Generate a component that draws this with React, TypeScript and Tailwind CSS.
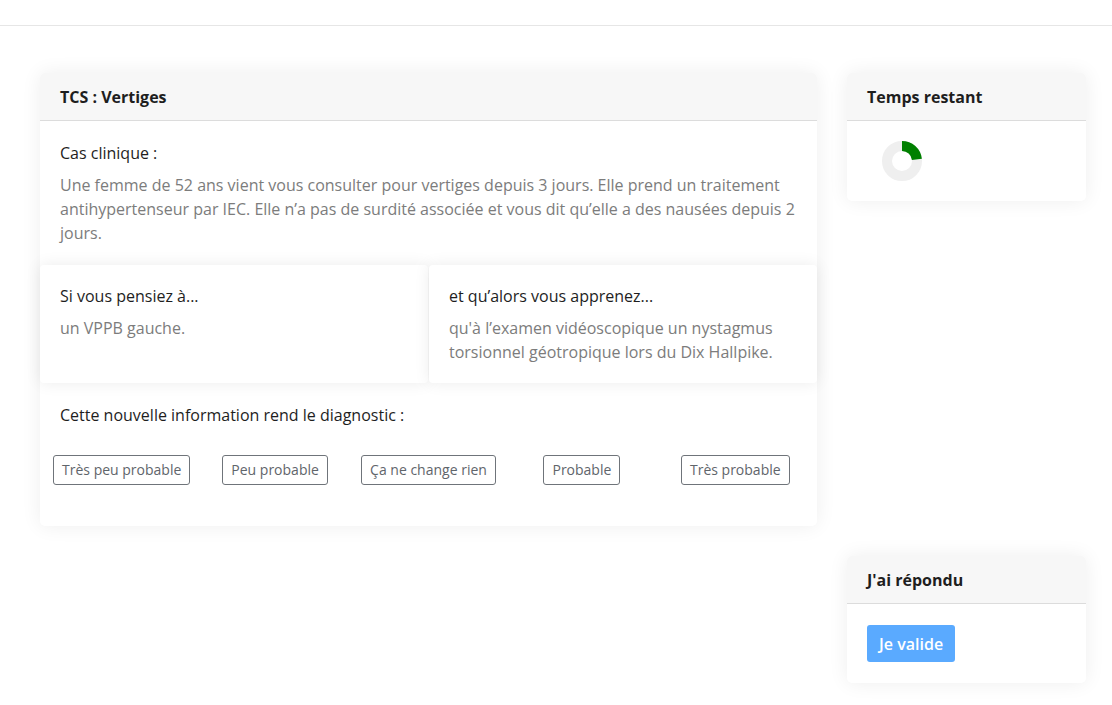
import React from 'react';

const choices = ['Très peu probable', 'Peu probable', 'Ça ne change rien', 'Probable', 'Très probable'];

function Card({ title, children, className = '' }: { title: string; children: React.ReactNode; className?: string }) {
  return (
    <div className={`bg-white rounded-[5px] shadow-[0_0_20px_rgba(0,0,0,0.07)] ${className}`}>
      <div className="h-[48px] flex items-center px-5 bg-[#f7f7f7] border-b border-[#dcdcdc] rounded-t-[5px]">
        <h3 className="text-[16px] font-bold text-[#1e1e1e]">{title}</h3>
      </div>
      {children}
    </div>
  );
}

function Donut({ percent }: { percent: number }) {
  const r = 15;
  const c = 2 * Math.PI * r;
  return (
    <svg width="40" height="40" viewBox="0 0 40 40">
      <circle cx="20" cy="20" r={r} fill="none" stroke="#efefef" strokeWidth="10" />
      <circle
        cx="20"
        cy="20"
        r={r}
        fill="none"
        stroke="#008000"
        strokeWidth="10"
        strokeDasharray={`${c * percent} ${c}`}
        transform="rotate(-90 20 20)"
      />
    </svg>
  );
}

export default function App() {
  return (
    <div className="min-h-[705px] bg-white text-[16px] leading-6 text-[#1e1e1e]" style={{ fontFamily: '"Open Sans", sans-serif' }}>
      {/* Top bar */}
      <div className="h-[26px] border-b border-[#e6e6e6]" />

      <div className="flex items-start gap-[30px] pl-[40px] pt-[47px]">
        {/* Main question card */}
        <Card title="TCS : Vertiges" className="w-[777px] pb-[41px]">
          <div className="p-5">
            <p className="mb-2">Cas clinique :</p>
            <p className="text-[#7c7c7c]">
              Une femme de 52 ans vient vous consulter pour vertiges depuis 3 jours. Elle prend un traitement
              antihypertenseur par IEC. Elle n’a pas de surdité associée et vous dit qu’elle a des nausées depuis 2
              jours.
            </p>
          </div>

          <div className="flex gap-px">
            <div className="flex-1 h-[118px] px-5 pt-[19px] bg-white rounded-[4px] shadow-[0_0_16px_rgba(0,0,0,0.08)]">
              <p className="mb-2">Si vous pensiez à...</p>
              <p className="text-[#7c7c7c]">un VPPB gauche.</p>
            </div>
            <div className="flex-1 h-[118px] px-5 pt-[19px] bg-white rounded-[4px] shadow-[0_0_16px_rgba(0,0,0,0.08)]">
              <p className="mb-2">et qu’alors vous apprenez...</p>
              <p className="text-[#7c7c7c]">
                qu'à l’examen vidéoscopique un nystagmus
                <br />
                torsionnel géotropique lors du Dix Hallpike.
              </p>
            </div>
          </div>

          <div className="px-5 pt-5">
            <p>Cette nouvelle information rend le diagnostic :</p>
          </div>

          <div className="grid grid-cols-5 px-[5px] mt-[28px]">
            {choices.map((label) => (
              <div key={label} className="flex justify-center">
                <button className="h-[30px] px-2 border border-[#6f747a] rounded-[3px] text-[14px] leading-5 text-[#5f656b] bg-white">
                  {label}
                </button>
              </div>
            ))}
          </div>
        </Card>

        {/* Right column */}
        <div className="w-[239px] flex flex-col">
          <Card title="Temps restant">
            <div className="h-[80px] pl-[35px] pt-5">
              <Donut percent={0.23} />
            </div>
          </Card>

          <Card title="J'ai répondu" className="mt-[355px]">
            <div className="px-5 pt-[21px] pb-[21px]">
              <button className="h-[37px] px-3 rounded-[3px] bg-[#5aaaff] text-white font-semibold text-[16px]">
                Je valide
              </button>
            </div>
          </Card>
        </div>
      </div>
    </div>
  );
}
